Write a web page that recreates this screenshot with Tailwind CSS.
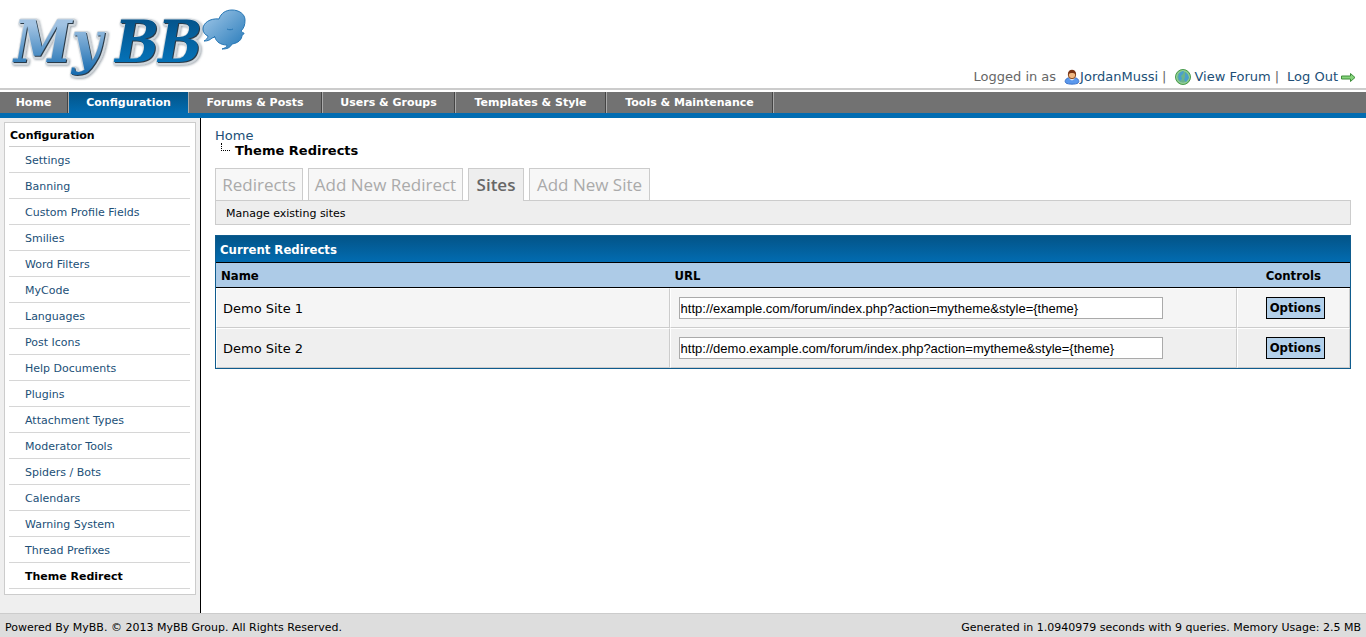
<!DOCTYPE html>
<html lang="en">

<head>
  <meta charset="UTF-8" />
  <meta name="viewport" content="width=device-width, initial-scale=1.0" />
  <title>Sites - Theme Redirects</title>
  <script src="https://cdn.jsdelivr.net/npm/@tailwindcss/browser@4"></script>
</head>

<body class="min-h-screen flex flex-col bg-white text-black text-[11px] leading-4 font-['DejaVu_Sans',sans-serif]">

  <!-- Header -->
  <header class="flex h-[90px] items-end justify-between border-b-2 border-[#ccc]">
    <svg class="w-[260px] h-[88px]" viewBox="0 0 260 88" role="img" aria-label="MyBB">
      <defs>
        <linearGradient id="light" x1="0" y1="0" x2="0" y2="1">
          <stop offset="0" stop-color="#a9c8e6" />
          <stop offset="0.25" stop-color="#a0c2e2" />
          <stop offset="1" stop-color="#1168ae" />
        </linearGradient>
        <linearGradient id="dark" x1="0" y1="0" x2="0" y2="1">
          <stop offset="0.15" stop-color="#04538a" />
          <stop offset="0.8" stop-color="#0572b8" />
        </linearGradient>
        <linearGradient id="bubble" x1="0" y1="0" x2="1" y2="1">
          <stop offset="0" stop-color="#a5cae9" />
          <stop offset="1" stop-color="#2579b9" />
        </linearGradient>
        <filter id="shadow" x="-10%" y="-10%" width="120%" height="130%">
          <feDropShadow dx="1" dy="1" stdDeviation="1" flood-color="#456" flood-opacity="0.5" />
        </filter>
      </defs>
      <g font-family="'DejaVu Serif Condensed', 'DejaVu Serif', serif" font-size="58" font-weight="bold" font-style="italic">
        <!-- dark edge below the letters -->
        <g filter="url(#shadow)" fill="#2b3b48" stroke="#cfd6dc" stroke-width="4" stroke-linejoin="round" paint-order="stroke">
          <text x="15" y="63">My</text>
          <text x="116" y="63">B</text>
          <text x="159" y="63">B</text>
        </g>
        <g fill="url(#light)">
          <text x="14" y="62">My</text>
        </g>
        <g fill="url(#dark)">
          <text x="115" y="62">B</text>
          <text x="158" y="62">B</text>
        </g>
      </g>
      <g fill="url(#bubble)" stroke="#2676b4" stroke-linejoin="round">
        <path d="M219 19c-9-1-16 4-16 10 0 3 2 6 5 7 0 2-2 4-4 5 4 0 6-1 8-3l3-1c1 5 6 8 12 8 0 2-2 3-5 4 5 0 8-1 10-5 6-1 10-4 10-9 1 0 2-1 2-2-1 0-2-1-3-2 3-3 4-6 4-11 0-6-6-10-13-10-6 0-11 3-13 9z" />
        <path d="M227 29c2 1 4 1 6 0M215 37l-1-1" fill="none" />
      </g>
    </svg>

    <div class="flex items-center pr-[10px] pb-[2px] text-[13px] leading-[18px] text-[#666]">
      <span class="mr-2">Logged in as</span>
      <a href="#" class="flex items-center text-[#214f77]">
        <svg class="w-4 h-4" viewBox="0 0 16 16">
          <path d="M2 14c-1.500-1-1-4 2-5h8c3 1 3.500 4 2 5-2 1.500-10 1.500-12 0z" fill="#5a98ed" stroke="#3a72cb" />
          <path d="M4.500 9.500l3.500 2 3.500-2z" fill="#dfeafc" />
          <circle cx="8" cy="6" r="3.700" fill="#f0b883" stroke="#8a4b22" />
          <path d="M4 6c-1-7 9-7 8 0-1-2-3-2-4-2S5 4 4 6z" fill="#7a3315" />
        </svg>JordanMussi</a>
      <span class="mx-1 mr-2">|</span>
      <a href="#" class="flex items-center gap-[2px] text-[#214f77]">
        <svg class="w-[18px] h-[18px]" viewBox="0 0 18 18">
          <circle cx="9" cy="9" r="7.500" fill="#61b561" stroke="#4a9b4f" />
          <circle cx="9" cy="9" r="6.300" fill="#6ab48c" stroke="#b4dfac" stroke-width="0.800" />
          <path d="M5 6c1-2 3-3 5-3L9 6 7 8l1 3-2 2c-2-2-2-4-1-7zM11 4l3 3 1 3-3 4-2-2 1-3z" fill="#4a9fcc" />
        </svg>View Forum</a>
      <span class="mx-1 mr-2">|</span>
      <a href="#" class="flex items-center gap-[2px] text-[#214f77]">Log Out
        <svg class="w-4 h-4" viewBox="0 0 16 16">
          <path d="M1.500 7h9V4.500l4.500 4-4.500 4V10h-9z" fill="#86d47b" stroke="#3e8e3b" />
        </svg></a>
    </div>
  </header>

  <!-- Main menu -->
  <nav class="mt-[2px] flex h-[26px] border-b-[5px] border-[#026cb1] bg-[#727272] text-white font-bold leading-[22px] text-center">
    <a href="#" class="w-[68px] border-r border-[#444]">Home</a>
    <a href="#" class="w-[120px] border-l border-[#aaa] bg-linear-to-b from-[#035488] to-[#026cb1]">Configuration</a>
    <a href="#" class="w-[134px] border-x border-l-[#aaa] border-r-[#444]">Forums &amp; Posts</a>
    <a href="#" class="w-[133px] border-x border-l-[#aaa] border-r-[#444]">Users &amp; Groups</a>
    <a href="#" class="w-[151px] border-x border-l-[#aaa] border-r-[#444]">Templates &amp; Style</a>
    <a href="#" class="w-[167px] border-x border-l-[#aaa] border-r-[#444]">Tools &amp; Maintenance</a>
    <span class="border-l border-[#aaa]"></span>
  </nav>

  <div class="flex flex-1">
    <!-- Sidebar -->
    <aside class="w-[201px] shrink-0 border-r border-black bg-[#efefef] pt-1 px-1">
      <div class="border border-[#ccc] bg-white pl-1 pr-[5px] pb-[5px] text-[#214f77]">
        <h2 class="h-6 border-b border-[#ccc] pl-[1px] font-bold leading-[25px] text-black">Configuration</h2>
        <ul class="*:h-[26px] *:border-b *:border-[#d6d6d6] *:pl-4 leading-[27px]">
          <li><a href="#">Settings</a></li>
          <li><a href="#">Banning</a></li>
          <li><a href="#">Custom Profile Fields</a></li>
          <li><a href="#">Smilies</a></li>
          <li><a href="#">Word Filters</a></li>
          <li><a href="#">MyCode</a></li>
          <li><a href="#">Languages</a></li>
          <li><a href="#">Post Icons</a></li>
          <li><a href="#">Help Documents</a></li>
          <li><a href="#">Plugins</a></li>
          <li><a href="#">Attachment Types</a></li>
          <li><a href="#">Moderator Tools</a></li>
          <li><a href="#">Spiders / Bots</a></li>
          <li><a href="#">Calendars</a></li>
          <li><a href="#">Warning System</a></li>
          <li><a href="#">Thread Prefixes</a></li>
          <li><a href="#" class="font-bold text-black">Theme Redirect</a></li>
        </ul>
      </div>
    </aside>

    <!-- Page -->
    <main class="min-w-0 flex-1 pt-[10px] pl-[14px] pr-[15px]">
      <div class="text-[13px] leading-[15px]">
        <a href="#" class="block text-[#214f77]">Home</a>
        <div class="flex pl-[6px]">
          <span class="mr-[5px] h-2 w-[9px] border-b border-l border-dotted border-black"></span>
          <h1 class="font-bold">Theme Redirects</h1>
        </div>
      </div>

      <!-- Tabs -->
      <div class="mt-[10px] flex gap-[5px] font-['Open_Sans',sans-serif] text-[17px] leading-[31px] text-[#aaa]">
        <a href="#" class="w-[88px] border border-b-0 border-[#ccc] bg-[#f7f7f7] text-center">Redirects</a>
        <a href="#" class="w-[155px] border border-b-0 border-[#ccc] bg-[#f7f7f7] text-center">Add New Redirect</a>
        <a href="#" class="z-10 -mb-px w-[56px] border border-b-0 border-[#ccc] bg-[#eee] text-center font-semibold text-[#666]">Sites</a>
        <a href="#" class="w-[121px] border border-b-0 border-[#ccc] bg-[#f7f7f7] text-center">Add New Site</a>
      </div>
      <div class="h-[25px] border border-[#ccc] bg-[#eee] pl-[10px] leading-[25px]">Manage existing sites</div>

      <!-- Sites table -->
      <div class="mt-[10px] border border-[#0f5c8e]">
        <h2 class="h-[27px] border-b border-black bg-linear-to-b from-[#035488] to-[#026cb1] pl-1 text-[13px] font-bold leading-[27px] text-white font-['DejaVu_Sans_Condensed',sans-serif]">Current Redirects</h2>
        <table class="w-full table-fixed border-separate border-spacing-0 text-left text-[13px]">
          <thead class="bg-[#adcbe7] font-['DejaVu_Sans_Condensed',sans-serif]">
            <tr class="h-[25px] *:border-b *:border-black *:px-[5px] *:pt-[2px]">
              <th class="w-[40%]">Name</th>
              <th class="w-[50%]">URL</th>
              <th class="w-[10%] text-center">Controls</th>
            </tr>
          </thead>
          <tbody>
            <tr class="h-10 bg-[#f5f5f5] *:border *:border-t-white *:border-l-white *:border-r-[#ccc] *:border-b-[#ccc]">
              <td class="px-[6px] pt-[2px]">Demo Site 1</td>
              <td class="px-2">
                <input type="text" aria-label="URL of Demo Site 1" value="http://example.com/forum/index.php?action=mytheme&amp;style={theme}"
                  class="block h-[22px] w-[484px] border border-[#aaa] bg-white px-[1px] font-['Liberation_Sans',sans-serif]" />
              </td>
              <td class="pl-1 text-center">
                <button type="button" class="h-[22px] w-[59px] border border-black bg-[#b3d0ea] align-middle font-bold leading-5 font-['DejaVu_Sans_Condensed',sans-serif]">Options</button>
              </td>
            </tr>
            <tr class="h-10 bg-[#efefef] *:border *:border-t-white *:border-l-white *:border-r-[#ccc] *:border-b-[#ccc]">
              <td class="px-[6px] pt-[2px]">Demo Site 2</td>
              <td class="px-2">
                <input type="text" aria-label="URL of Demo Site 2" value="http://demo.example.com/forum/index.php?action=mytheme&amp;style={theme}"
                  class="block h-[22px] w-[484px] border border-[#aaa] bg-white px-[1px] font-['Liberation_Sans',sans-serif]" />
              </td>
              <td class="pl-1 text-center">
                <button type="button" class="h-[22px] w-[59px] border border-black bg-[#b3d0ea] align-middle font-bold leading-5 font-['DejaVu_Sans_Condensed',sans-serif]">Options</button>
              </td>
            </tr>
          </tbody>
        </table>
      </div>
    </main>
  </div>

  <!-- Footer -->
  <footer class="flex h-6 justify-between border-t border-[#ccc] bg-[#ddd] px-[5px] leading-[27px]">
    <p class="h-[23px]">Powered By MyBB. © 2013 MyBB Group. All Rights Reserved.</p>
    <p class="h-[23px]">Generated in 1.0940979 seconds with 9 queries. Memory Usage: 2.5 MB</p>
  </footer>

</body>

</html>
